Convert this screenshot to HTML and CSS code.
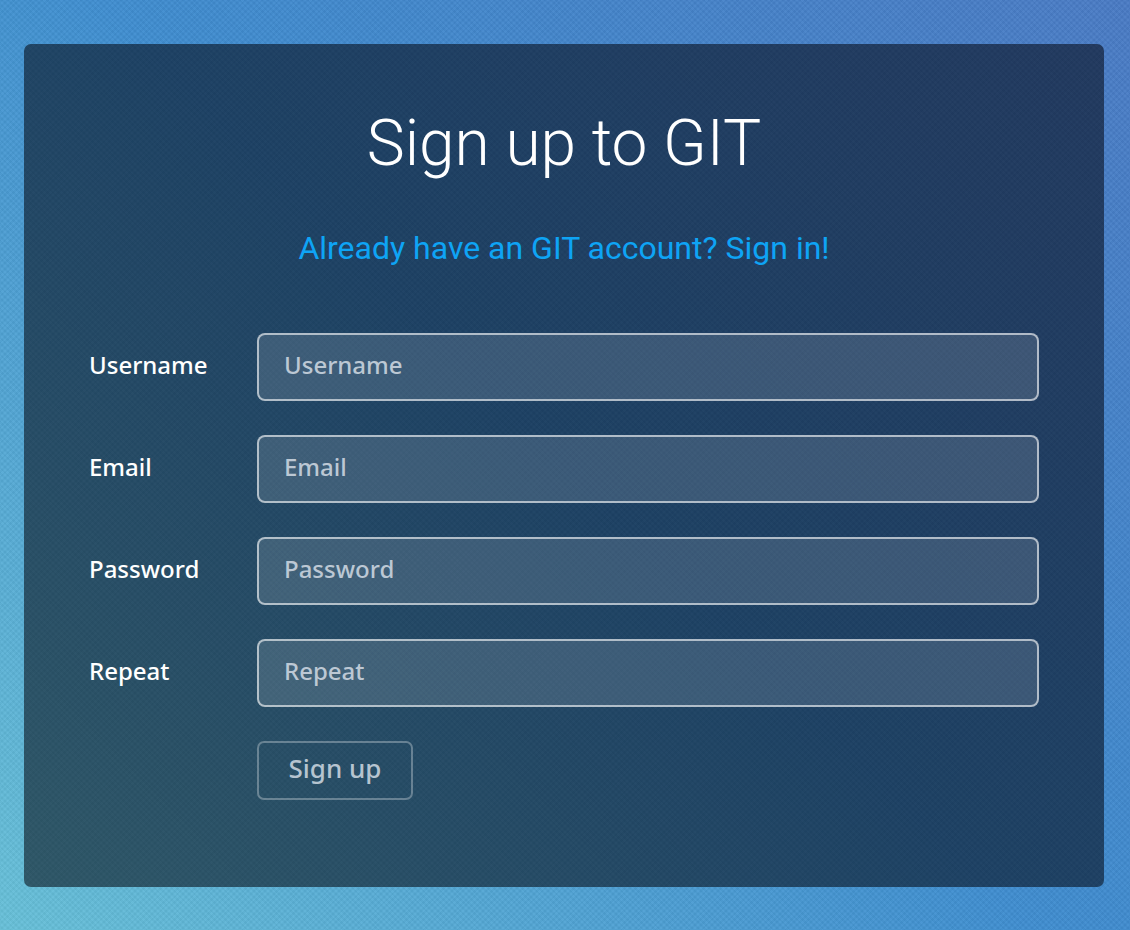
FILE: index.html
```html
<!DOCTYPE html>
<html>
<head>
<meta charset="utf-8">
<link rel="stylesheet" href="styles.css">
</head>
<body>
<div class="page">
  <div class="card">
    <h1 class="title">Sign up to GIT</h1>
    <a class="signin" href="#">Already have an GIT account? Sign in!</a>
    <form class="form">
      <div class="row">
        <label class="label">Username</label>
        <input class="field" type="text" placeholder="Username">
      </div>
      <div class="row">
        <label class="label">Email</label>
        <input class="field" type="text" placeholder="Email">
      </div>
      <div class="row">
        <label class="label">Password</label>
        <input class="field" type="password" placeholder="Password">
      </div>
      <div class="row">
        <label class="label">Repeat</label>
        <input class="field" type="password" placeholder="Repeat">
      </div>
      <div class="row">
        <span class="label"></span>
        <button class="btn" type="button">Sign up</button>
      </div>
    </form>
  </div>
</div>
</body>
</html>
```
FILE: styles.css
```css
html, body {
  margin: 0;
  padding: 0;
  height: 100%;
}
body {
  background:
    repeating-linear-gradient(45deg, rgba(255,255,255,0.025) 0 2px, rgba(0,0,0,0.025) 2px 4px),
    repeating-linear-gradient(-45deg, rgba(255,255,255,0.025) 0 2px, rgba(0,0,0,0.025) 2px 4px),
    linear-gradient(45deg, #67c0d8 0%, #3f8dd0 50%, #4a7bc5 100%);
  font-family: "Noto Sans", sans-serif;
}
.page {
  box-sizing: border-box;
  height: 930px;
  padding: 44px 26px 43px 24px;
  display: flex;
}
.card {
  flex: 1;
  background: rgba(0, 0, 8, 0.53);
  border-radius: 7px;
  padding: 0 65px;
  display: flex;
  flex-direction: column;
  align-items: center;
}
.title {
  margin: 62px 0 0;
  font-family: Roboto, sans-serif;
  font-weight: 300;
  font-size: 64px;
  line-height: 75px;
  color: #ffffff;
}
.signin {
  margin-top: 48px;
  font-family: Roboto, sans-serif;
  font-size: 32px;
  line-height: 38px;
  color: #0ea4f5;
  text-decoration: none;
}
.form {
  align-self: stretch;
  margin-top: 66px;
  display: flex;
  flex-direction: column;
  gap: 34px;
}
.row {
  display: flex;
  align-items: center;
}
.label {
  width: 168px;
  flex: none;
  padding-bottom: 6px;
  font-size: 24px;
  font-weight: 500;
  color: #ffffff;
}
.field {
  flex: 1;
  box-sizing: border-box;
  height: 68px;
  border: 2px solid rgba(255, 255, 255, 0.6);
  border-radius: 8px;
  background: rgba(255, 255, 255, 0.13);
  padding: 0 25px 6px;
  font-family: "Noto Sans", sans-serif;
  font-size: 24px;
  font-weight: 500;
  color: #ffffff;
  outline: none;
}
.field::placeholder {
  color: #bcc8d4;
  opacity: 1;
}
.btn {
  box-sizing: border-box;
  width: 156px;
  height: 59px;
  border: 2px solid rgba(255, 255, 255, 0.3);
  border-radius: 7px;
  background: transparent;
  font-family: "Noto Sans", sans-serif;
  font-size: 26px;
  font-weight: 500;
  color: #b6c4d0;
  padding: 0 0 5px;
}
```
